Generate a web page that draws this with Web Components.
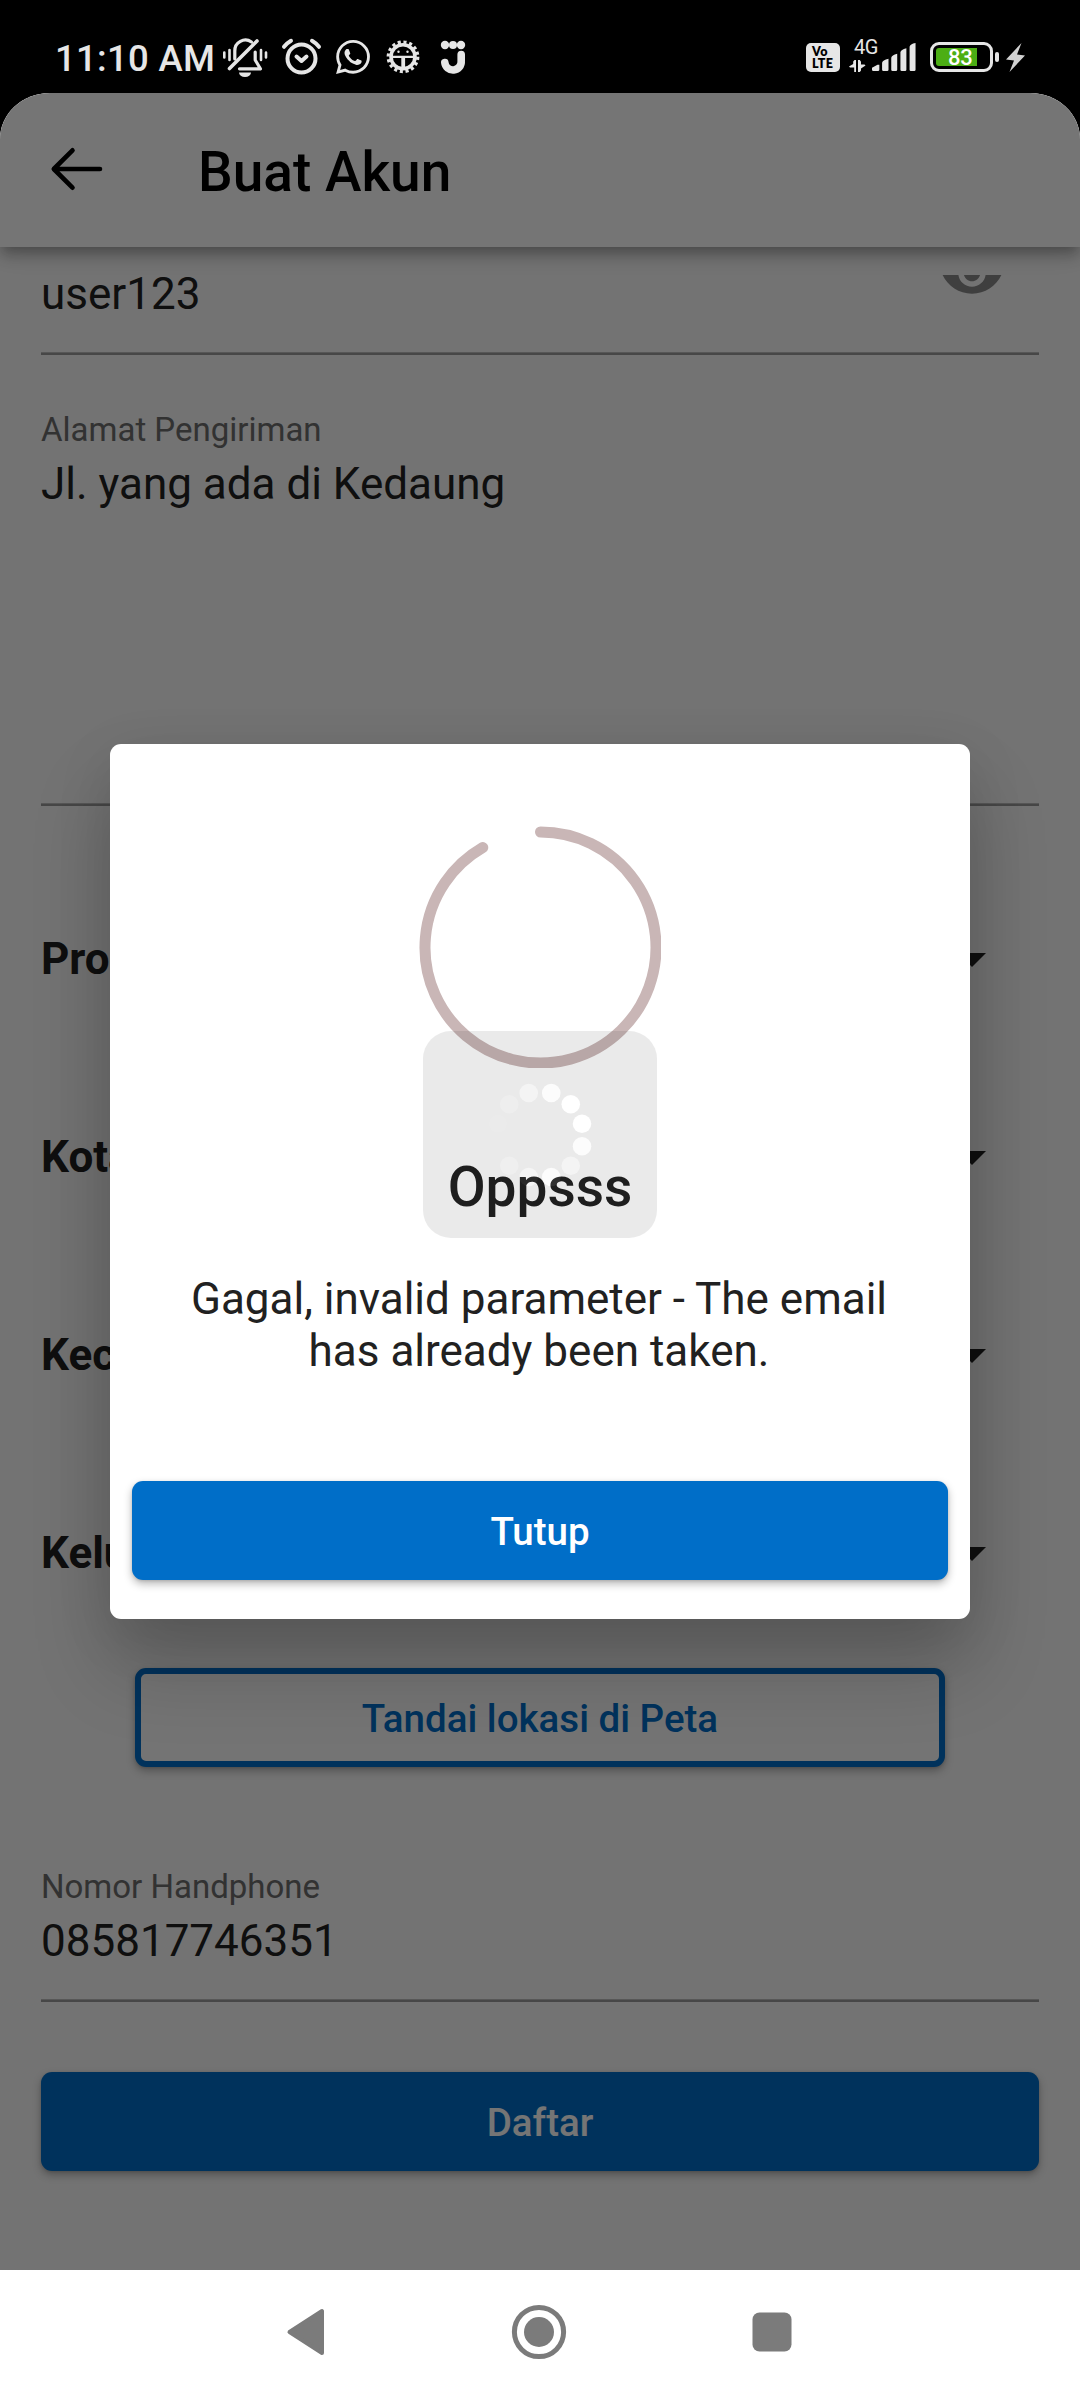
<!DOCTYPE html>
<html lang="id">
<head>
<meta charset="utf-8">
<title>Buat Akun</title>
<style>
  body { margin: 0; width: 1080px; height: 2400px; overflow: hidden; background: #000; font-family: Roboto, sans-serif; }
</style>
</head>
<body>
<signup-screen></signup-screen>
<script>
const define = (name, html, setup) => {
  const tpl = document.createElement('template');
  tpl.innerHTML = html;
  customElements.define(name, class extends HTMLElement {
    constructor() {
      super();
      this.attachShadow({ mode: 'open' }).append(tpl.content.cloneNode(true));
    }
    connectedCallback() { if (setup) setup(this, this.shadowRoot); }
  });
};

define('status-bar', `
<style>
  :host { display: flex; height: 93px; background: #000; color: #e6e6e6; box-sizing: border-box; justify-content: space-between; align-items: flex-start; }
  .left { display: flex; padding-left: 55px; }
  .time { font-size: 36.5px; font-weight: 500; line-height: 42px; margin-top: 38px; width: 161px; white-space: nowrap; letter-spacing: .3px; }
  svg { display: block; fill: #e6e6e6; }
  .icons { display: flex; margin-top: 32px; }
  .right { display: flex; padding-right: 55px; margin-top: 36px; }
  .volte { width: 34px; height: 29px; margin-top: 7px; border-radius: 5px; background: #e6e6e6; color: #000; font: 800 12.5px/12px Lato, sans-serif; box-sizing: border-box; padding: 3px 0 0 6px; letter-spacing: .3px; }
  .net { width: 64px; margin-left: 12px; display: flex; }
  .tech { width: 18px; font-size: 20px; line-height: 23px; letter-spacing: -.6px; padding-left: 2px; }
  .tech svg { margin: 1px 0 0 -5px; }
  .bars { display: block; }
  .battery { width: 63px; height: 30px; box-sizing: border-box; border: 3px solid #e6e6e6; border-radius: 9px; margin: 6px 0 0 14px; padding: 3px; display: flex; }
  .charge { width: 41px; height: 18px; border-radius: 3px 0 0 3px; background: #4cae14; color: #fff; font-size: 22px; font-weight: 500; line-height: 20px; text-indent: 12px; letter-spacing: -.3px; white-space: nowrap; }
  .cap { width: 4px; height: 10px; border-radius: 2px; background: #e6e6e6; margin: 16px 0 0 2px; }
  .bolt { margin: 7px 0 0 7px; }
</style>
<div class="left">
  <span class="time">11:10 AM</span>
  <div class="icons">
    <svg width="52" height="52" viewBox="0 0 52 52">
      <g fill="none" stroke="#e6e6e6" stroke-width="3.2" stroke-linecap="round">
        <path d="M13.5 36.5 41 9" stroke-width="3.6"/>
        <path d="M18.8 27V19A10.6 10.6 0 0 1 35.5 10"/>
        <path d="M39.2 20v8l5.200 8.800H23.500" stroke-linejoin="round"/>
        <path d="M8.300 20.500v5M13.500 18v10M45 18v10M50 20.500v5" stroke-width="2.600"/>
      </g>
      <path d="M23 40.500h12a6 4.500 0 0 1-12 0z"/>
    </svg>
    <svg width="60" height="52" viewBox="52 0 60 52">
      <g fill="none" stroke="#e6e6e6" stroke-width="4" stroke-linecap="round" stroke-linejoin="round">
        <circle cx="85.500" cy="26.500" r="14"/>
        <path d="M80.500 24.500l5 4.500 5-4.500"/>
        <path d="M68 14.800A24 24 0 0 1 75 8.800M96 8.800A24 24 0 0 1 103 14.800"/>
      </g>
    </svg>
    <svg width="50" height="52" viewBox="112 0 50 52">
      <path transform="translate(120 8) scale(1.4167)" d="M17.472 14.382c-.297-.149-1.758-.867-2.03-.967-.273-.099-.471-.148-.67.15-.197.297-.767.966-.94 1.164-.173.199-.347.223-.644.075-.297-.15-1.255-.463-2.39-1.475-.883-.788-1.480-1.761-1.653-2.059-.173-.297-.018-.458.130-.606.134-.133.298-.347.446-.520.149-.174.198-.298.298-.497.099-.198.050-.371-.025-.520-.075-.149-.669-1.612-.916-2.207-.242-.579-.487-.500-.669-.510-.173-.008-.371-.010-.570-.010-.198 0-.520.074-.792.372-.272.297-1.040 1.016-1.040 2.479 0 1.462 1.065 2.875 1.213 3.074.149.198 2.096 3.200 5.077 4.487.709.306 1.262.489 1.694.625.712.227 1.360.195 1.871.118.571-.085 1.758-.719 2.006-1.413.248-.694.248-1.289.173-1.413-.074-.124-.272-.198-.570-.347m-5.421 7.403h-.004a9.870 9.870 0 0 1-5.031-1.378l-.361-.214-3.741.982.998-3.648-.235-.374a9.860 9.860 0 0 1-1.510-5.260c.001-5.450 4.436-9.884 9.888-9.884 2.640 0 5.122 1.030 6.988 2.898a9.825 9.825 0 0 1 2.893 6.994c-.003 5.450-4.437 9.884-9.885 9.884m8.413-18.297A11.815 11.815 0 0 0 12.050 0C5.495 0 .160 5.335.157 11.892c0 2.096.547 4.142 1.588 5.945L.057 24l6.305-1.654a11.882 11.882 0 0 0 5.683 1.448h.005c6.554 0 11.890-5.335 11.893-11.893a11.821 11.821 0 0 0-3.480-8.413z"/>
    </svg>
    <svg width="50" height="52" viewBox="162 0 50 52">
      <circle cx="187" cy="24.800" r="14.800" fill="none" stroke="#e6e6e6" stroke-width="3.200" stroke-dasharray="3.100 2.712"/>
      <circle cx="187" cy="24.800" r="12" fill="none" stroke="#e6e6e6" stroke-width="3.600"/>
      <circle cx="182.500" cy="19.800" r="1.200"/><circle cx="191.500" cy="19.800" r="1.200"/>
      <path d="M176 23.800h22v2.200h-22zM185.300 26h3.800v12h-3.800z"/>
    </svg>
    <svg width="48" height="52" viewBox="212 0 48 52">
      <circle cx="229" cy="13" r="4.200"/><circle cx="237" cy="13" r="4"/><circle cx="245" cy="13" r="4.200"/>
      <path d="M245.200 22.500V29a8.200 8.200 0 0 1-16.400 1.500" fill="none" stroke="#e6e6e6" stroke-width="7.600" stroke-linecap="round"/>
    </svg>
  </div>
</div>
<div class="right">
  <div class="volte">Vo<br>LTE</div>
  <div class="net">
    <div class="tech">4G
      <svg width="17" height="13" viewBox="0 0 17 13"><path d="M4.200 1.500 5.500 0H7v12H5.200V7.500H1L0 6.500 4.200 4zM9 0h1.800L12 1.800V4.500h3.500l1 1L12 8.500V10.500L10.800 12H9z"/></svg>
    </div>
    <svg class="bars" width="48" height="38" viewBox="868 36 48 38">
      <path d="M868 69l6-3.500h2V71a1.500 1.500 0 0 1-1.500 1.500h-5A1.500 1.500 0 0 1 868 71zM879 63.500q.500-3 7-4.500V71a1.500 1.500 0 0 1-1.500 1.500h-4A1.500 1.500 0 0 1 879 71zM889 58q.500-3 6.500-4.500V71a1.500 1.500 0 0 1-1.500 1.500h-3.500A1.500 1.500 0 0 1 889 71zM899 52q.500-3 6.500-4.500V71a1.500 1.500 0 0 1-1.500 1.500h-3.500A1.500 1.500 0 0 1 899 71zM909 46q.500-3 6.500-4V71a1.500 1.500 0 0 1-1.500 1.500h-3.500A1.500 1.500 0 0 1 909 71z"/>
    </svg>
  </div>
  <div class="battery"><div class="charge">83</div></div>
  <div class="cap"></div>
  <svg class="bolt" width="19" height="29" viewBox="0 0 19 29" style="fill:#d2d2d2"><path d="M15.500 0 0 16.500 8 17.500 3.500 29 19 12.500 11 11.500z"/></svg>
</div>`);

define('app-bar', `
<style>
  :host { display: flex; align-items: center; height: 154px; background: #fff; position: relative;
    box-shadow: 0 5.500px 11px -2.750px rgba(0,0,0,.200), 0 11px 14px rgba(0,0,0,.140), 0 2.750px 27px rgba(0,0,0,.120); }
  svg { display: block; margin: 0 0 2px 49px; }
  h1 { margin: 3px 0 0 93px; font-size: 55px; font-weight: 500; line-height: 64px; color: #000; }
</style>
<svg width="56" height="46" viewBox="0 0 56 46"><path d="M51 23H5M23.500 4.300 4.800 23 23.500 41.700" fill="none" stroke="#000" stroke-width="4.600" stroke-linecap="round" stroke-linejoin="round"/></svg>
<h1><slot></slot></h1>`);

define('text-field', `
<style>
  :host { display: flex; flex-direction: column; box-sizing: border-box; }
  .label { font-size: 33px; line-height: 39px; margin-bottom: 9px; color: #6e6e6e; }
  .label:empty { display: none; }
  .row { display: flex; flex: 1; justify-content: space-between; }
  .value { font-size: 44px; line-height: 52px; color: #212121; }
  .line { height: 3px; background: linear-gradient(#bdbdbd 0 1px, #9b9b9b 1px); }
</style>
<div class="label"></div>
<div class="row"><div class="value"><slot></slot></div><slot name="suffix"></slot></div>
<div class="line"></div>`,
(el, root) => { root.querySelector('.label').textContent = el.getAttribute('label') || ''; });

define('eye-icon', `
<style>:host { display: block; width: 66px; height: 66px; } svg { display: block; }</style>
<svg width="66" height="66" viewBox="0 0 24 24"><path fill="#898989" d="M12 4.500C7 4.500 2.730 7.610 1 12c1.730 4.390 6 7.500 11 7.500s9.270-3.110 11-7.500c-1.730-4.390-6-7.500-11-7.500zM12 17c-2.760 0-5-2.240-5-5s2.240-5 5-5 5 2.240 5 5-2.240 5-5 5zm0-8c-1.660 0-3 1.340-3 3s1.340 3 3 3 3-1.340 3-3-1.340-3-3-3z"/></svg>`);

define('drop-down', `
<style>
  :host { display: flex; height: 198px; align-items: center; justify-content: space-between; padding-right: 53px; color: #212121; font-size: 44px; font-weight: 700; line-height: 52px; }
  svg { display: block; margin-top: 2px; }
</style>
<span><slot></slot></span>
<svg width="28" height="14" viewBox="0 0 28 14"><path d="M0 0h28L14 14z" fill="#212121"/></svg>`);

define('app-button', `
<style>
  :host { display: flex; align-items: center; justify-content: center; height: 99px; box-sizing: border-box; padding-top: 2px; border-radius: 11px; background: #006ec8; color: #fff;
    font-size: 38.500px; font-weight: 500; line-height: 45px; box-shadow: 0 4px 8px rgba(0,0,0,.280), 0 1px 3px rgba(0,0,0,.120); }
  :host([outlined]) { background: #fdfdfd; border: 6px solid #006ec8; color: #006ec8; }
</style><span><slot></slot></span>`);

define('progress-ring', `
<style>:host { display: block; width: 242px; height: 242px; } svg { display: block; }</style>
<svg width="242" height="242" viewBox="-121.500 -121.500 242 242"><path d="M0-115.500A115.500 115.500 0 1 1-57.750-100.030" fill="none" stroke="#c9b6b6" stroke-width="11" stroke-linecap="round"/></svg>`);

define('loading-hud', `
<style>
  :host { display: flex; align-items: center; justify-content: center; width: 234px; height: 207px; border-radius: 28px; background: #000; opacity: .080; }
  svg { display: block; }
</style>
<svg width="108" height="108" viewBox="-54 -54 108 108"></svg>`,
(el, root) => {
  const alphas = [.9, 1, 1, .88, .5, .86, .55, .25, .04, .05, .22, .5];
  root.querySelector('svg').innerHTML = alphas.map((a, i) => {
    const t = (15 + 30 * i) * Math.PI / 180;
    return `<circle cx="${(43.500 * Math.sin(t)).toFixed(2)}" cy="${(-43.500 * Math.cos(t)).toFixed(2)}" r="9.300" fill="#fff" fill-opacity="${a}"/>`;
  }).join('');
});

define('alert-dialog', `
<style>
  :host { display: flex; flex-direction: column; align-items: center; box-sizing: border-box; width: 860px; height: 875px; padding: 82px 22px 39px; background: #fff; border-radius: 11px;
    box-shadow: 0 48px 80px rgba(0,0,0,.200), 0 14px 60px rgba(0,0,0,.090); }
  h2 { margin: 87px 0 0; font-size: 55px; font-weight: 500; line-height: 64px; color: #212121; }
  p { margin: 54px 2px auto 0; width: 700px; font-size: 44px; line-height: 52px; text-align: center; color: #212121; }
  app-button { align-self: stretch; }
</style>
<progress-ring></progress-ring>
<h2><slot name="title"></slot></h2>
<p><slot></slot></p>
<app-button><slot name="action"></slot></app-button>`);

define('nav-bar', `
<style>
  :host { display: flex; height: 130px; box-sizing: border-box; background: #fff; justify-content: center; gap: 185px; padding: 0 2px 6px 0; align-items: center; }
  svg { display: block; }
</style>
<svg width="40" height="48" viewBox="0 0 40 48"><path d="M3.500 24 36 3v42z" fill="#7b7b7b" stroke="#7b7b7b" stroke-width="4" stroke-linejoin="round"/></svg>
<svg width="56" height="56" viewBox="-28 -28 56 56"><circle r="24.600" fill="none" stroke="#7b7b7b" stroke-width="5"/><circle r="15" fill="#7b7b7b"/></svg>
<svg width="40" height="40" viewBox="0 0 40 40"><rect x=".500" y=".500" width="39" height="39" rx="7" fill="#7b7b7b"/></svg>`);

define('signup-screen', `
<style>
  :host { display: flex; flex-direction: column; width: 1080px; height: 2400px; position: relative; overflow: hidden; }
  .app { flex: 1; min-height: 0; display: flex; flex-direction: column; background: #fafafa; border-radius: 50px 50px 0 0 / 46px 46px 0 0; overflow: hidden; position: relative; }
  .view { flex: 1; padding: 21px 41px 0; display: flex; flex-direction: column; position: relative; }
  .view > * { flex: none; }
  .pass { height: 87px; }
  eye-icon { margin: -28px 34px 0 0; clip-path: inset(35px 0 0 0); }
  .addr { margin-top: 55px; height: 396px; }
  .drops { margin-top: 54px; }
  .map { margin: 16px 94px 0; }
  .phone { margin-top: 100px; height: 135px; }
  .submit { margin-top: 70px; }
  .scrim { position: absolute; inset: 0; background: rgba(0,0,0,.540); }
  alert-dialog { position: absolute; left: 110px; top: 651px; }
  loading-hud { position: absolute; left: 423px; top: 938px; }
</style>
<status-bar></status-bar>
<div class="app">
  <app-bar>Buat Akun</app-bar>
  <div class="view">
    <text-field class="pass">user123<eye-icon slot="suffix"></eye-icon></text-field>
    <text-field class="addr" label="Alamat Pengiriman">Jl. yang ada di Kedaung</text-field>
    <div class="drops">
      <drop-down>Pro</drop-down>
      <drop-down>Kota</drop-down>
      <drop-down>Kec</drop-down>
      <drop-down>Kelu</drop-down>
    </div>
    <app-button class="map" outlined>Tandai lokasi di Peta</app-button>
    <text-field class="phone" label="Nomor Handphone">085817746351</text-field>
    <app-button class="submit">Daftar</app-button>
  </div>
  <div class="scrim"></div>
  <alert-dialog><span slot="title">Oppsss</span>Gagal, invalid parameter - The email has already been taken.<span slot="action">Tutup</span></alert-dialog>
  <loading-hud></loading-hud>
</div>
<nav-bar></nav-bar>`);
</script>
</body>
</html>
